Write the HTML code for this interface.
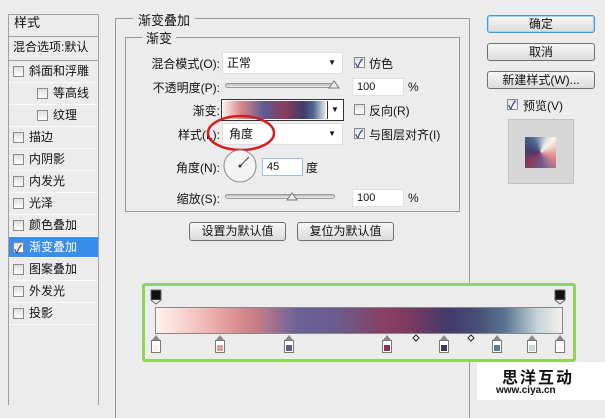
<!DOCTYPE html>
<html><head><meta charset="utf-8"><style>
*{margin:0;padding:0;box-sizing:border-box}
body{width:605px;height:405px;background:#ececec;font-family:"Liberation Sans","Noto Sans CJK SC",sans-serif;font-size:12px;color:#111;position:relative;overflow:hidden}
.a{position:absolute}
.cb{position:absolute;width:11px;height:11px;border:1px solid #8a8a8a;background:linear-gradient(#e0e0e0,#fff)}
.cb.on::after{content:"✓";position:absolute;left:0;top:-3px;font-size:11px;color:#2a3f8a;font-weight:bold}
.item{position:absolute;left:9px;width:89px;height:22px;border-bottom:1px solid #fafafa;line-height:21px;padding-left:20px}
.item .cb{left:4px;top:5px}
.sel{background:#3a8ee8;color:#fff}
.inp{position:absolute;background:#fff;border:1px solid #e0e0e0;padding-left:4px;line-height:17px;font-size:11px}
.btn{position:absolute;border:1px solid #707070;border-radius:3px;background:linear-gradient(#f6f6f6,#dcdcdc);text-align:center;line-height:16px;font-size:12px}
.slider{position:absolute;height:5px;border:1px solid #999;border-radius:3px;background:linear-gradient(#bbb,#eee)}
.thumb{position:absolute;width:0;height:0}
.lbl{position:absolute;text-align:right;font-size:12px}
.stop{position:absolute;width:10px;height:13px;border:1px solid #777;background:#fff}
.stop i{position:absolute;left:1px;top:4px;width:6px;height:6px;display:block}
.stop::before{content:"";position:absolute;left:0;top:-6px;width:0;height:0;border-left:4px solid transparent;border-right:4px solid transparent;border-bottom:5px solid #888}
</style></head><body>
<!-- left panel -->
<div class="a" style="left:8px;top:14px;width:91px;height:391px;border:1px solid #a0a0a0;border-bottom:none;background:#ececec"></div>
<div class="a" style="left:9px;top:15px;width:89px;height:22px;border-bottom:1px solid #a0a0a0;line-height:16px;padding-left:5px;font-size:13px">样式</div>
<div class="a" style="left:9px;top:37px;width:89px;height:24px;border-bottom:1px solid #a0a0a0;line-height:20px;padding-left:4px;font-size:12px;white-space:nowrap;overflow:hidden">混合选项:默认</div>
<div class="item" style="top:61px"><span class="cb"></span>斜面和浮雕</div>
<div class="item" style="top:83px;padding-left:44px"><span class="cb" style="left:28px"></span>等高线</div>
<div class="item" style="top:105px;padding-left:44px"><span class="cb" style="left:28px"></span>纹理</div>
<div class="item" style="top:127px"><span class="cb"></span>描边</div>
<div class="item" style="top:149px"><span class="cb"></span>内阴影</div>
<div class="item" style="top:171px"><span class="cb"></span>内发光</div>
<div class="item" style="top:193px"><span class="cb"></span>光泽</div>
<div class="item" style="top:215px"><span class="cb"></span>颜色叠加</div>
<div class="item sel" style="top:237px;height:21px"><span class="cb on"></span>渐变叠加</div>
<div class="item" style="top:259px"><span class="cb"></span>图案叠加</div>
<div class="item" style="top:281px"><span class="cb"></span>外发光</div>
<div class="item" style="top:303px"><span class="cb"></span>投影</div>

<!-- outer fieldset -->
<div class="a" style="left:115px;top:18px;width:355px;height:400px;border:1px solid #9a9a9a;border-bottom:none"></div>
<div class="a" style="left:133px;top:10px;padding:0 5px;background:#ececec;font-size:13px">渐变叠加</div>
<div class="a" style="left:125px;top:37px;width:335px;height:175px;border:1px solid #9a9a9a"></div>
<div class="a" style="left:142px;top:28px;padding:0 4px;background:#ececec;font-size:13px">渐变</div>

<div class="lbl" style="left:140px;top:55px;width:80px">混合模式(O):</div>
<div class="inp" style="left:222px;top:52px;width:121px;height:22px;line-height:20px;font-size:12px">正常<span style="position:absolute;right:6px;top:0;font-size:8px">▼</span></div>
<span class="cb on" style="left:354px;top:57px"></span><div class="a" style="left:369px;top:55px">仿色</div>

<div class="lbl" style="left:140px;top:79px;width:80px">不透明度(P):</div>
<div class="slider" style="left:225px;top:83px;width:110px"></div>
<svg class="a" style="left:328px;top:79px" width="12" height="10"><path d="M1 9 L6 2 L11 9 Z" fill="#eee" stroke="#777"/></svg>
<div class="inp" style="left:352px;top:78px;width:52px;height:18px">100</div><div class="a" style="left:408px;top:80px">%</div>

<div class="lbl" style="left:140px;top:102px;width:80px">渐变:</div>
<div class="a" style="left:221px;top:99px;width:123px;height:22px;border:1px solid #333;background:#fff"></div>
<div class="a" style="left:223px;top:101px;width:103px;height:18px;background:linear-gradient(90deg,#fbeee8,#d9848a 18%,#5d5a92 40%,#8a3b5c 60%,#433b6a 78%,#4f6a8d 88%,#e9eeee)"></div>
<div class="a" style="left:327px;top:101px;width:15px;height:18px;border-left:1px solid #333;font-size:8px;text-align:center;line-height:18px">▼</div>
<span class="cb" style="left:354px;top:104px"></span><div class="a" style="left:369px;top:102px">反向(R)</div>

<div class="lbl" style="left:140px;top:126px;width:80px">样式(L):</div>
<div class="inp" style="left:222px;top:123px;width:121px;height:22px;line-height:20px;font-size:12px;padding-left:6px">角度<span style="position:absolute;right:6px;top:0;font-size:8px">▼</span></div>
<span class="cb on" style="left:354px;top:128px"></span><div class="a" style="left:369px;top:126px">与图层对齐(I)</div>
<svg class="a" style="left:205px;top:113px" width="72" height="40"><ellipse cx="36" cy="20" rx="33" ry="17" fill="none" stroke="#d21f26" stroke-width="2.5"/></svg>

<div class="lbl" style="left:140px;top:159px;width:80px">角度(N):</div>
<svg class="a" style="left:222px;top:148px" width="36" height="36"><circle cx="18" cy="18" r="16" fill="#f4f4f4" stroke="#888"/><line x1="18" y1="18" x2="27" y2="9" stroke="#444"/><circle cx="18" cy="18" r="1.5" fill="#333"/></svg>
<div class="inp" style="left:262px;top:158px;width:41px;height:18px;border-color:#9cc0e0">45</div><div class="a" style="left:306px;top:159px">度</div>

<div class="lbl" style="left:140px;top:190px;width:80px">缩放(S):</div>
<div class="slider" style="left:225px;top:194px;width:110px"></div>
<svg class="a" style="left:286px;top:191px" width="12" height="10"><path d="M1 9 L6 2 L11 9 Z" fill="#eee" stroke="#777"/></svg>
<div class="inp" style="left:352px;top:189px;width:52px;height:18px">100</div><div class="a" style="left:408px;top:191px">%</div>

<div class="btn" style="left:189px;top:222px;width:97px;height:19px">设置为默认值</div>
<div class="btn" style="left:297px;top:222px;width:97px;height:19px">复位为默认值</div>

<!-- right buttons -->
<div class="btn" style="left:487px;top:15px;width:108px;height:18px;border-color:#3d9ad6;box-shadow:0 0 0 1px #a8d4f2 inset">确定</div>
<div class="btn" style="left:487px;top:43px;width:108px;height:18px">取消</div>
<div class="btn" style="left:487px;top:71px;width:108px;height:18px">新建样式(W)...</div>
<span class="cb on" style="left:507px;top:99px"></span><div class="a" style="left:523px;top:97px">预览(V)</div>
<div class="a" style="left:508px;top:119px;width:66px;height:65px;background:#d7d7d7;border:1px solid #c4c4c4"></div>
<div class="a" style="left:525px;top:137px;width:31px;height:31px;background:conic-gradient(from 45deg,#fbf2ec,#e8b5b0 10%,#d98189 20%,#6c5d92 35%,#8a3b5c 50%,#433b6a 65%,#4f6a8d 80%,#dfe7e8 95%,#fbf2ec)"></div>

<!-- gradient editor -->
<div class="a" style="left:142px;top:283px;width:434px;height:79px;border:3px solid #8fd454;border-radius:3px;background:#ececec"></div>
<div class="a" style="left:155px;top:307px;width:408px;height:27px;border:1px solid #888;background:linear-gradient(90deg,#fff3ee,#f4c4c0 10%,#dc8e90 20%,#c47d88 25%,#6a6298 35%,#6b5b8e 45%,#8a3e60 57%,#7c3a5e 62%,#433a6a 72%,#485279 80%,#5b7593 86%,#c5d5d9 94%,#f4f0ec)"></div>
<svg class="a" style="left:150px;top:289px" width="420" height="16">
<rect x="1" y="1" width="10" height="10" fill="#111" stroke="#666"/><path d="M1 11 L6 15 L11 11" fill="#eee" stroke="#666"/>
<rect x="405" y="1" width="10" height="10" fill="#111" stroke="#666"/><path d="M405 11 L410 15 L415 11" fill="#eee" stroke="#666"/>
</svg>
<div class="stop" style="left:151px;top:340px"><i style="background:#fff3f0"></i></div>
<div class="stop" style="left:215px;top:340px"><i style="background:#e29a98"></i></div>
<div class="stop" style="left:284px;top:340px"><i style="background:#5e5a92"></i></div>
<div class="stop" style="left:382px;top:340px"><i style="background:#88304e"></i></div>
<div class="stop" style="left:439px;top:340px"><i style="background:#3d3766"></i></div>
<div class="stop" style="left:492px;top:340px"><i style="background:#5c7aa0"></i></div>
<div class="stop" style="left:527px;top:340px"><i style="background:#cbdadb"></i></div>
<div class="stop" style="left:555px;top:340px"><i style="background:#fbf6f2"></i></div>
<svg class="a" style="left:412px;top:334px" width="64" height="10"><path d="M4 1 L7 4 L4 7 L1 4Z" fill="#fff" stroke="#222"/><path d="M59 1 L62 4 L59 7 L56 4Z" fill="#fff" stroke="#222"/></svg>

<!-- watermark -->
<div class="a" style="left:477px;top:362px;width:128px;height:38px;background:#fff"></div>
<div class="a" style="left:502px;top:364px;font-size:16px;font-weight:bold;letter-spacing:2px;color:#111">思洋互动</div>
<div class="a" style="left:496px;top:385px;font-size:10px;font-weight:bold;color:#111">www.ciya.cn</div>
</body></html>
